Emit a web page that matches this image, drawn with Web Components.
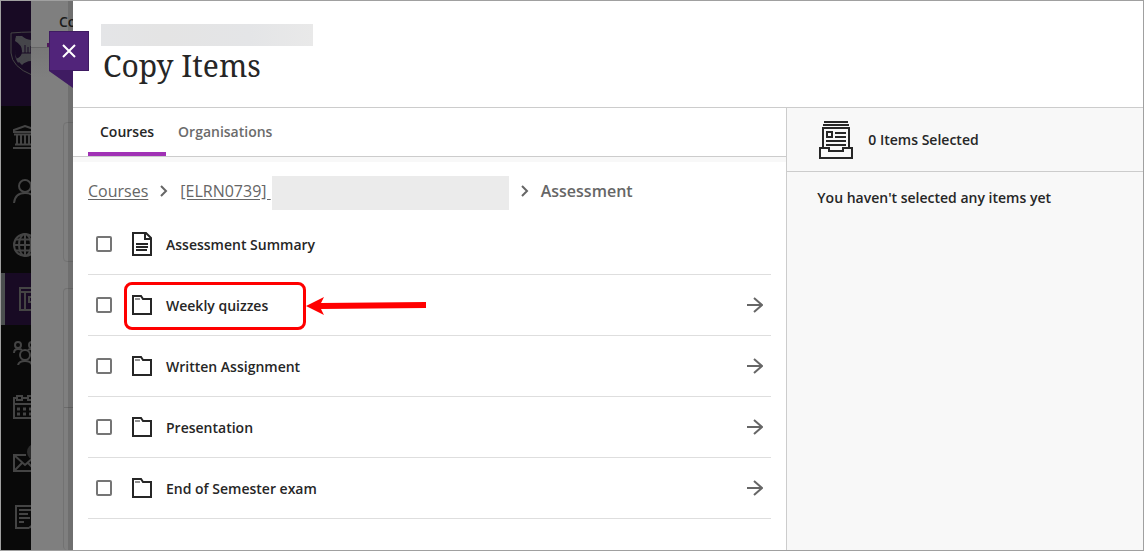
<!DOCTYPE html>
<html lang="en">
<head>
<meta charset="utf-8">
<meta name="viewport" content="width=device-width, initial-scale=1">
<title>Copy Items</title>
<style>
  body{
    margin:0;
    font-family:"Open Sans", "Noto Sans", sans-serif;
    font-size:14px;
    line-height:20px;
    color:#262626;
  }
</style>
</head>
<body>
<app-shell>
  <nav-rail slot="rail"></nav-rail>
  <page-behind slot="behind">Co</page-behind>
  <copy-panel header="Copy Items">
    <tab-bar slot="main">
      <tab-item selected>Courses</tab-item>
      <tab-item>Organisations</tab-item>
    </tab-bar>
    <crumb-trail slot="main"></crumb-trail>
    <item-list slot="main">
      <list-row icon="document" name="Assessment Summary"></list-row>
      <list-row icon="folder" name="Weekly quizzes" open><callout-mark></callout-mark></list-row>
      <list-row icon="folder" name="Written Assignment" open></list-row>
      <list-row icon="folder" name="Presentation" open></list-row>
      <list-row icon="folder" name="End of Semester exam" open></list-row>
    </item-list>
    <selection-pane slot="side" header="0 Items Selected">You haven't selected any items yet</selection-pane>
  </copy-panel>
</app-shell>

<script>
const define = (name, html, setup) => {
  const template = document.createElement('template');
  template.innerHTML = html;
  window.customElements.define(name, class extends HTMLElement {
    constructor() {
      super();
      this.attachShadow({ mode: 'open' });
      this.shadowRoot.appendChild(template.content.cloneNode(true));
      if (setup) setup(this, this.shadowRoot);
    }
  });
};

// SHELL
define('app-shell', `
  <style>
    :host{
      display:grid;
      grid-template-columns:30px 42px minmax(0, 1fr);
      min-height:100vh;
      box-sizing:border-box;
      border:1px solid #a0a0a0;
      background:#fff;
    }
  </style>
  <slot name="rail"></slot>
  <slot name="behind"></slot>
  <slot></slot>
`);

// NAV RAIL
define('nav-rail', `
  <style>
    :host{
      display:block;
      overflow:hidden;
      background:#090909;
    }
    .brand{
      height:105px;
      background:#180a24;
      display:flex;
      padding:30px 0 0 9px;
      box-sizing:border-box;
    }
    svg{
      flex:none;
      fill:none;
      stroke:#444;
      stroke-width:2;
    }
    nav{
      display:flex;
      flex-direction:column;
      gap:2px;
      padding-top:5px;
    }
    a{
      height:52px;
      display:flex;
      align-items:center;
      padding-left:12px;
    }
    a.active{
      background:#180a24;
      border-left:4px solid #4b4f4f;
      padding-left:14px;
    }
  </style>
  <div class="brand">
    <svg width="44" height="46" viewBox="0 0 44 46">
      <path d="M1 2Q12 1 22 1Q32 1 43 2V22Q42 36 22 44Q2 36 1 22Z" stroke-width="1"/>
      <path d="M6 5H12Q16 9 22 9V5H38V22Q36 32 22 39V30Q16 30 12 34Q6 29 5 22V18Q5 25 6 28Q12 26 12 20Q12 14 5 10Z" fill="#45454a" stroke="none"/>
      <path d="M7 6L16 16M7 30L16 25" stroke="#45454a" stroke-width="4"/>
      <path d="M13 16H31V24H13Z" fill="#45454a" stroke="none"/>
      <path d="M15 14V22M18 16V22M21 15V22M10 22H24" stroke="#180a24" stroke-width="1"/>
    </svg>
  </div>
  <nav>
    <a href="#institution" aria-label="Institution">
      <svg width="24" height="24" viewBox="0 0 24 24"><path d="M1 7V5L12 1L23 5V7ZM1 9.500H23M4 9V19M8 9V19M12 9V19M16 9V19M20 9V19M2 19.500H22M0 23H24"/></svg>
    </a>
    <a href="#profile" aria-label="Profile">
      <svg width="24" height="24" viewBox="0 0 24 24"><circle cx="12" cy="7" r="6"/><path d="M1 24Q2 14 12 14Q22 14 23 24"/></svg>
    </a>
    <a href="#activity" aria-label="Activity">
      <svg width="24" height="24" viewBox="0 0 24 24"><circle cx="12" cy="12" r="11"/><ellipse cx="12" cy="12" rx="6" ry="11"/><path d="M12 1V23M1 12H23M3 6.500H21M3 17.500H21"/></svg>
    </a>
    <a href="#courses" class="active" aria-label="Courses">
      <svg width="24" height="24" viewBox="0 0 24 24"><path d="M1 1H23V23H1ZM1 5H23M6 5V23M23 10H10V15H23"/></svg>
    </a>
    <a href="#groups" aria-label="Organisations">
      <svg width="24" height="24" viewBox="0 0 24 24"><circle cx="5" cy="4" r="3"/><circle cx="19" cy="4" r="3"/><circle cx="12" cy="14" r="5"/><path d="M1 12Q1 8 5 8Q8 8 9 9M23 12Q23 8 19 8Q16 8 15 9M5 24Q6 20 12 20Q18 20 19 24"/></svg>
    </a>
    <a href="#calendar" aria-label="Calendar">
      <svg width="24" height="24" viewBox="0 0 24 24"><path d="M4 3H1V23H23V3H20M9 3H15M1 9H23"/><rect x="4" y="1" width="5" height="4"/><rect x="15" y="1" width="5" height="4"/><path d="M4 14H20M4 19H20" stroke-width="3" stroke-dasharray="3 3"/></svg>
    </a>
    <a href="#messages" aria-label="Messages">
      <svg width="28" height="34" viewBox="0 0 28 34"><path d="M13 11H1V27H23V15M1 11L12 21L23 11M2 26L9 19M22 26L15 19"/><circle cx="22" cy="8" r="8" fill="#2c2c2c" stroke="none"/></svg>
    </a>
    <a href="#grades" aria-label="Grades">
      <svg width="24" height="28" viewBox="0 0 24 28"><path d="M16 27H3V5H21V20M6 9H18M6 13H15M6 17H17M6 21H11M16 27L22 22"/></svg>
    </a>
  </nav>
`);

// PAGE UNDER THE PANEL
define('page-behind', `
  <style>
    :host{
      display:flex;
      flex-direction:column;
      position:relative;
      overflow:hidden;
      background:#7f7f7f;
      font-weight:600;
      color:#1c1c1c;
    }
    :host::after{
      content:"";
      position:absolute;
      inset:0 0 0 auto;
      width:5px;
      background:rgba(0,0,0,0.12);
    }
    header{
      height:42px;
      box-sizing:border-box;
      padding:11px 0 0 28px;
      white-space:nowrap;
    }
    .line{
      display:flex;
      justify-content:flex-end;
      height:4px;
      border-bottom:1px solid #666;
    }
    .line span{
      width:26px;
      background:#4f1859;
    }
    .cards{
      flex:1;
      display:flex;
      flex-direction:column;
      gap:26px;
      padding:74px 0 0 32px;
      background:linear-gradient(#787878, #7f7f7f 30px);
    }
    .card{
      height:140px;
      width:80px;
      box-sizing:border-box;
      border:1px solid #727272;
      border-radius:4px;
    }
    .card.tall{
      flex:1;
      border-bottom:0;
    }
    .tall div{
      height:118px;
      border-bottom:1px solid #6b6b6b;
    }
  </style>
  <header><slot></slot></header>
  <div class="line"><span></span></div>
  <div class="cards">
    <div class="card"></div>
    <div class="card tall"><div></div></div>
  </div>
`);

// PANEL
define('copy-panel', `
  <style>
    :host{
      display:flex;
      flex-direction:column;
      position:relative;
      background:#fff;
    }
    header{
      height:107px;
      box-sizing:border-box;
      padding:23px 28px 0 28px;
      border-bottom:1px solid #ccc;
    }
    .course{
      width:212px;
      height:22px;
      background:linear-gradient(to right, #e4e5e7, #e4e4e4 30%, #e4e5e7 70%, #e9e9e9);
    }
    h1{
      margin:0;
      padding-left:2px;
      font:400 30px/40px "Noto Serif", "DejaVu Serif", serif;
    }
    .columns{
      flex:1;
      display:grid;
      grid-template-columns:minmax(0, 2fr) minmax(0, 1fr);
    }
    aside{
      background:#f8f8f8;
      border-left:1px solid #ccc;
    }
    .close{
      position:absolute;
      left:-24px;
      top:30px;
      width:40px;
      height:40px;
      padding:0;
      display:grid;
      place-items:center;
      background:#51247a;
      border:1px solid #3f1b62;
      cursor:pointer;
    }
    .fold{
      position:absolute;
      left:-24px;
      top:70px;
      width:24px;
      height:17px;
      background:#3f1b62;
      clip-path:polygon(0 0, 100% 0, 100% 100%);
    }
  </style>
  <header>
    <div class="course"></div>
    <h1></h1>
  </header>
  <div class="columns">
    <main><slot name="main"></slot></main>
    <aside><slot name="side"></slot></aside>
  </div>
  <div class="fold"></div>
  <button class="close" aria-label="Close">
    <svg width="14" height="14" viewBox="0 0 14 14"><path d="M1 1L13 13M13 1L1 13" stroke="#fff" stroke-width="2"/></svg>
  </button>
`, (el, root) => {
  root.querySelector('h1').textContent = el.getAttribute('header');
});

// TABS
define('tab-bar', `
  <style>
    :host{
      display:flex;
      height:48px;
      padding:0 15px;
      border-bottom:1px solid #ccc;
      box-shadow:0 5px 0 #f8f8f8;
    }
  </style>
  <slot></slot>
`);

define('tab-item', `
  <style>
    :host{
      display:flex;
    }
    button{
      padding:4px 12px 0 12px;
      border:0;
      border-bottom:4px solid transparent;
      background:none;
      font:inherit;
      font-weight:600;
      color:#6b6b6b;
      cursor:pointer;
    }
    :host([selected]) button{
      color:#262626;
      border-color:#a031b5;
    }
  </style>
  <button><slot></slot></button>
`);

// BREADCRUMBS
define('crumb-trail', `
  <style>
    :host{
      display:block;
      padding:19px 15px 4px 15px;
      font-size:16px;
      line-height:30px;
      color:#666;
    }
    nav{
      display:flex;
      align-items:flex-start;
      gap:12px;
      height:34px;
    }
    a{
      display:flex;
      gap:1px;
      color:inherit;
      text-underline-offset:2px;
      white-space:pre;
    }
    .hidden-name{
      width:237px;
      height:34px;
      background:#ebebeb;
    }
    svg{
      flex:none;
      fill:none;
      stroke:#666;
      stroke-width:2;
    }
    b{
      font-weight:600;
    }
  </style>
  <nav aria-label="Breadcrumb">
    <a href="#courses">Courses</a>
    <svg width="8" height="30" viewBox="0 0 8 30"><path d="M1 10L6 15L1 20"/></svg>
    <a href="#course"><span>[ELRN0739] </span><span class="hidden-name"></span></a>
    <svg width="8" height="30" viewBox="0 0 8 30"><path d="M1 10L6 15L1 20"/></svg>
    <b>Assessment</b>
  </nav>
`);

// ITEM LIST
define('item-list', `
  <style>
    :host{
      display:block;
      padding:0 15px;
    }
  </style>
  <div role="list"><slot></slot></div>
`);

const icons = {
  document: '<path d="M1 1H14L19 6V23H1ZM13 1V7H19M4 12H16M4 15H16M4 18H15"/>',
  folder: '<path d="M1 3H9L11 6H19V21H1Z"/><path d="M3 6H8" stroke-width="1"/>'
};

define('list-row', `
  <style>
    :host{
      display:flex;
      align-items:center;
      position:relative;
      height:60px;
      padding:0 8px;
      border-bottom:1px solid #dedede;
      font-weight:600;
    }
    input{
      appearance:none;
      flex:none;
      width:16px;
      height:16px;
      margin:0 20px 0 0;
      border:2px solid #757575;
      border-radius:2px;
      background:#fff;
    }
    input:checked{
      background:#757575;
    }
    label{
      flex:1;
      display:flex;
      align-items:center;
      gap:14px;
    }
    span{
      padding-top:2px;
    }
    svg{
      fill:none;
      stroke:#262626;
      stroke-width:2;
    }
    button{
      display:flex;
      padding:0;
      border:0;
      background:none;
      cursor:pointer;
    }
    button svg{
      stroke:#666;
    }
  </style>
  <input type="checkbox" id="pick">
  <label for="pick">
    <svg class="icon" width="20" height="24" viewBox="0 0 20 24"></svg>
    <span></span>
  </label>
  <button aria-label="Open"><svg width="16" height="16" viewBox="0 0 16 16"><path d="M0 8H15M7 1L15 8L7 15"/></svg></button>
  <slot></slot>
`, (el, root) => {
  el.setAttribute('role', 'listitem');
  root.querySelector('.icon').innerHTML = icons[el.getAttribute('icon')];
  root.querySelector('span').textContent = el.getAttribute('name');
  if (!el.hasAttribute('open')) {
    root.querySelector('button').remove();
  }
});

// CALLOUT, box and arrow laid over a row
define('callout-mark', `
  <style>
    :host{
      position:absolute;
      left:36px;
      top:7px;
      display:flex;
      align-items:center;
      pointer-events:none;
    }
    .box{
      width:182px;
      height:48px;
      box-sizing:border-box;
      border:3px solid #f00;
      border-radius:8px;
    }
  </style>
  <div class="box"></div>
  <svg width="121" height="20" viewBox="0 0 121 20"><path d="M0 10L18 1L15 7L120 6V12L15 13L18 19Z" fill="#f00"/></svg>
`);

// SELECTION
define('selection-pane', `
  <style>
    :host{
      display:block;
      font-weight:600;
    }
    header{
      display:flex;
      align-items:center;
      gap:15px;
      height:63px;
      padding:0 32px;
      border-bottom:1px solid #ccc;
    }
    svg{
      flex:none;
      fill:none;
      stroke:#262626;
      stroke-width:2;
    }
    p{
      margin:0;
      padding:16px 30px;
    }
  </style>
  <header>
    <svg width="34" height="38" viewBox="0 0 34 38"><path d="M5 1H29M4 4H30M4 26V7H30V26M16 12H27M16 16H27M7 20H27M7 24H27"/><rect x="8" y="11" width="5" height="5"/><path d="M1 27H10V30H24V27H33V37H1Z"/></svg>
    <span></span>
  </header>
  <p><slot></slot></p>
`, (el, root) => {
  root.querySelector('span').textContent = el.getAttribute('header');
});
</script>
</body>
</html>
